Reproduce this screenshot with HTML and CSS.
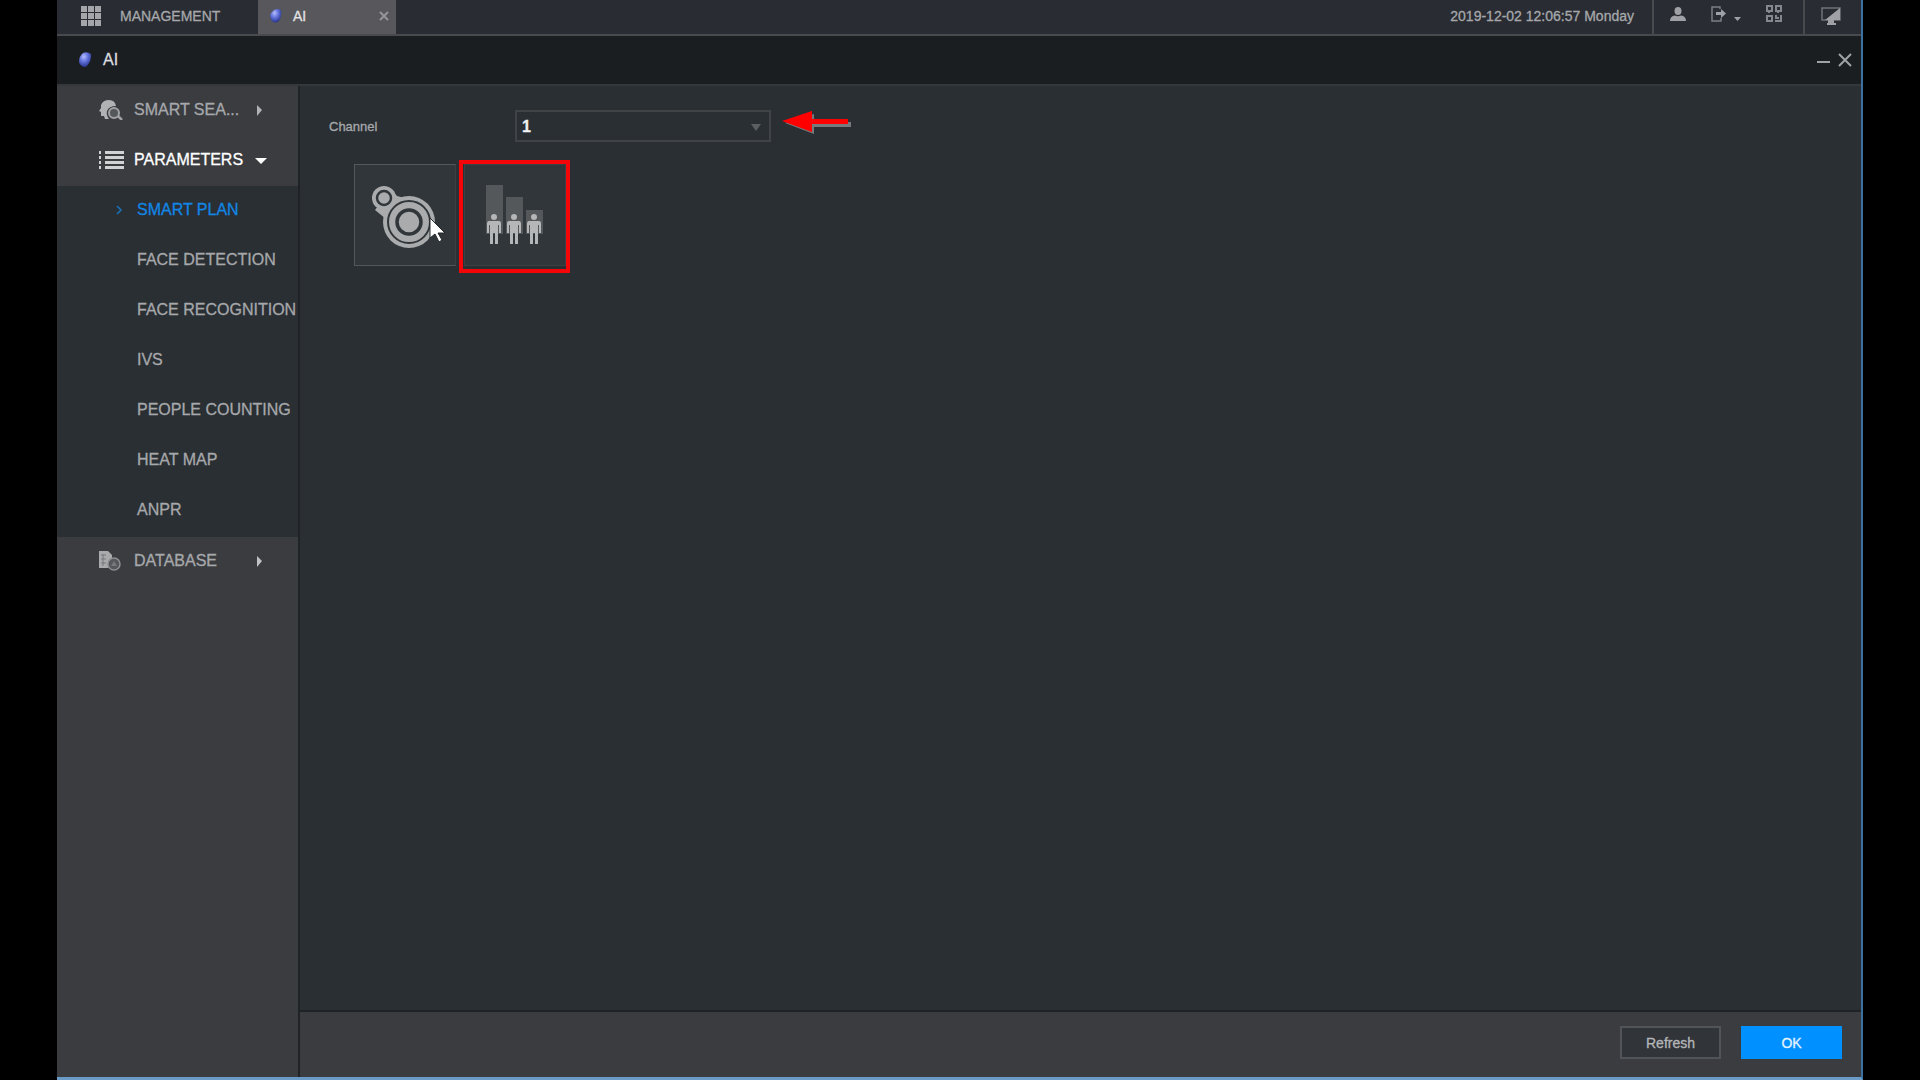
FILE: index.html
```html
<!DOCTYPE html>
<html lang="en">
<head>
    <meta charset="UTF-8">
    <meta name="viewport" content="width=device-width, initial-scale=1.0">
    <title>AI - Smart Plan</title>
    <link rel="stylesheet" href="styles.css">
</head>
<body>
    <div class="app">
        <header class="topbar">
            <button class="management">
                <svg width="20" height="20" viewBox="0 0 20 20" fill="#a4a6aa">
                    <path d="M0 0h6v6H0zM7 0h6v6H7zM14 0h6v6h-6zM0 7h6v6H0zM7 7h6v6H7zM14 7h6v6h-6zM0 14h6v6H0zM7 14h6v6H7zM14 14h6v6h-6z"/>
                </svg>
                MANAGEMENT
            </button>
            <div class="tab">
                <svg width="14" height="16" viewBox="0 0 14 16">
                    <defs>
                        <radialGradient id="gem" cx="0.4" cy="0.3" r="0.7">
                            <stop offset="0" stop-color="#b4bbfa"/>
                            <stop offset="0.45" stop-color="#6878e0"/>
                            <stop offset="1" stop-color="#28348e"/>
                        </radialGradient>
                    </defs>
                    <path d="M5 2Q9 0 12 2Q13 8 10 13Q6 16 3 13Q0 9 2 5Z" fill="url(#gem)"/>
                </svg>
                <span class="tab-name">AI</span>
                <button class="tab-close" aria-label="Close tab">
                    <svg width="10" height="10" viewBox="0 0 10 10" stroke="#96979b" stroke-width="2"><path d="M1 1l8 8M9 1L1 9"/></svg>
                </button>
            </div>
            <div class="clock">2019-12-02 12:06:57 Monday</div>
            <div class="tools">
                <button aria-label="User">
                    <svg width="16" height="16" viewBox="0 0 16 16" fill="#a0a1a7"><ellipse cx="8" cy="5" rx="3.500" ry="4"/><path d="M0 15q0-5 5-5.500q3 1.500 6 0q5 .5 5 5.500z"/></svg>
                </button>
                <button class="exit" aria-label="Log out">
                    <svg width="30" height="16" viewBox="0 0 30 16"><path d="M9 3V1H1v14h9v-3" fill="none" stroke="#7d7f85" stroke-width="1.500"/><path d="M5 6h5V3l5 4.500-5 4.500V9H5z" fill="#a0a1a7"/><path d="M23 11h7l-3.500 4z" fill="#a0a1a7"/></svg>
                </button>
                <button aria-label="QR code">
                    <svg width="16" height="18" viewBox="0 0 16 18" fill="none" stroke="#85878d" stroke-width="2"><path d="M1 1h5v5H1zM10 1h5v5h-5zM1 11h5v5H1zM15 10v6H9M10 10v3h3M3 7v1M12 7v1"/></svg>
                </button>
            </div>
            <button class="monitor" aria-label="Display">
                <svg width="20" height="18" viewBox="0 0 20 18"><path d="M1 1h18v12H1z" fill="none" stroke="#6f7177" stroke-width="1.500"/><path d="M19 1v12H4zM7 13h6v3h2v2H6v-2h1z" fill="#a0a1a7"/></svg>
            </button>
        </header>

        <div class="titlebar">
            <svg width="14" height="18" viewBox="0 0 14 18"><path d="M5 2Q9 0 13 3Q14 10 8 16Q2 16 1 11Q1 5 5 2Z" fill="url(#gem)"/></svg>
            <h1>AI</h1>
            <button aria-label="Minimize">
                <svg width="13" height="14" viewBox="0 0 13 14"><path d="M0 9h13" stroke="#a0a2a4" stroke-width="2"/></svg>
            </button>
            <button aria-label="Close">
                <svg width="14" height="14" viewBox="0 0 14 14"><path d="M1 1l12 12M13 1L1 13" stroke="#a0a2a4" stroke-width="2"/></svg>
            </button>
        </div>

        <div class="body">
            <nav class="sidebar">
                <button class="group">
                    <svg width="25" height="20" viewBox="0 0 25 20"><path d="M2 5Q4 0 10 0Q16 0 17 6Q10 6 8 11Q7 15 10 19H6L5 16H2V12L0 11L2 8Z" fill="#b0b2b4"/><circle cx="15" cy="13" r="5" fill="#55585b" stroke="#a0a2a4" stroke-width="2"/><path d="M19 16l4 4" stroke="#a0a2a4" stroke-width="2.500"/></svg>
                    <span class="group-name">SMART SEA...</span>
                    <svg width="12" height="12" viewBox="0 0 12 12"><path d="M2 1l5 5-5 6z" fill="#b0b2b4"/></svg>
                </button>
                <button class="group open">
                    <svg width="25" height="20" viewBox="0 0 25 20" fill="#d0d2d4"><path d="M0 1h2v3H0zM0 6h2v3H0zM0 11h2v3H0zM0 16h2v3H0zM6 1h19v3H6zM6 6h19v3H6zM6 11h19v3H6zM6 16h19v3H6z"/></svg>
                    <span class="group-name">PARAMETERS</span>
                    <svg width="12" height="12" viewBox="0 0 12 12"><path d="M0 4h12l-6 6z" fill="#fff"/></svg>
                </button>
                <div class="submenu">
                    <a href="#" class="active"><svg width="8" height="10" viewBox="0 0 8 10"><path d="M1 1l4 4-4 4" fill="none" stroke="#1a73bd" stroke-width="1.500"/></svg>SMART PLAN</a>
                    <a href="#">FACE DETECTION</a>
                    <a href="#">FACE RECOGNITION</a>
                    <a href="#">IVS</a>
                    <a href="#">PEOPLE COUNTING</a>
                    <a href="#">HEAT MAP</a>
                    <a href="#">ANPR</a>
                </div>
                <button class="group">
                    <svg width="25" height="20" viewBox="0 0 25 20"><path d="M0 0h9l4 4v6l-4 7H0z" fill="#a8aaac"/><path d="M2 4h5M2 8h5M2 12h5M4 3v12" stroke="#77797d"/><circle cx="15" cy="13" r="6" fill="#55575b" stroke="#8c8e92" stroke-width="1.500"/><path d="M12 15l3-5 3 5z" fill="#77797d"/></svg>
                    <span class="group-name">DATABASE</span>
                    <svg width="12" height="12" viewBox="0 0 12 12"><path d="M2 1l5 5-5 6z" fill="#c0c2c4"/></svg>
                </button>
            </nav>

            <div class="main">
                <main class="content">
                    <div class="channel-row">
                        <label for="channel">Channel</label>
                        <div class="select-box">
                            <select id="channel">
                                <option>1</option>
                            </select>
                            <svg width="10" height="8" viewBox="0 0 10 8"><path d="M0 0h10L5 7z" fill="#5c5f62"/></svg>
                        </div>
                        <svg class="arrow" width="72" height="26" viewBox="0 0 72 26">
                            <path d="M3 12L32 3v8h37v5H32v7z" fill="#777a7c"/>
                            <path d="M0 10L30 0v8h36v5H30v8z" fill="#f00"/>
                        </svg>
                    </div>
                    <div class="plans">
                        <button class="plan" aria-label="IVS">
                            <svg width="100" height="100" viewBox="0 0 100 100">
                                <g fill="#a9abac">
                                    <path d="M20 45L31 54L54 34L42 31L36 24Z"/>
                                    <circle cx="29" cy="33" r="12"/>
                                    <circle cx="54" cy="57" r="26"/>
                                </g>
                                <g fill="none" stroke="#31363a">
                                    <circle cx="29" cy="33" r="7" stroke-width="2.500"/>
                                    <circle cx="54" cy="57" r="21" stroke-width="2"/>
                                    <circle cx="54" cy="57" r="12" stroke-width="3.500"/>
                                </g>
                            </svg>
                            <svg class="cursor" width="17" height="26" viewBox="0 0 17 26"><path d="M1 1v20l5-4 4 8 3-2-4-7h7z" fill="#fff" stroke="#24282b"/></svg>
                        </button>
                        <button class="plan selected" aria-label="People counting">
                            <svg width="100" height="100" viewBox="0 0 100 100">
                                <path d="M21 20h17v49H21zM41 32h17v37H41zM61 45h17v24H61z" fill="#54585b"/>
                                <defs>
                                    <g id="person" fill="#b4b6b7">
                                        <circle cx="8" cy="3" r="3"/>
                                        <path d="M3 7h10q2 0 2 3v9h-2v-8h-1v19H9V19H7v11H4V11H3v8H1v-9q0-3 2-3z"/>
                                    </g>
                                </defs>
                                <use href="#person" x="21" y="49"/>
                                <use href="#person" x="41" y="49"/>
                                <use href="#person" x="61" y="49"/>
                            </svg>
                        </button>
                    </div>
                </main>
                <footer class="actions">
                    <button class="btn">Refresh</button>
                    <button class="btn primary">OK</button>
                </footer>
            </div>
        </div>
    </div>
</body>
</html>
```
FILE: styles.css
```css
:root {
    --panel: #2a2f33;
    --side: #3a3c40;
    --text: #a6a8ab;
    --blue: #0090ff;
}

* {
    box-sizing: border-box;
}

body {
    margin: 0;
    background: #000;
    color: var(--text);
    font-family: "Liberation Sans", Arial, sans-serif;
    font-size: 14px;
    -webkit-text-stroke: 0.3px;
}

button {
    display: flex;
    align-items: center;
    padding: 0;
    border: 0;
    background: none;
    color: inherit;
    font: inherit;
    cursor: pointer;
}

svg {
    display: block;
    flex: none;
}

.app {
    display: flex;
    flex-direction: column;
    min-height: 100vh;
    margin: 0 57px;
    background: var(--panel);
    border-right: 2px solid #3b70a0;
    border-bottom: 3px solid #6b9cc8;
}

/* top bar */
.topbar {
    display: flex;
    height: 36px;
    background: #292c32;
    border-bottom: 2px solid #484a4e;
}

.management {
    gap: 19px;
    width: 201px;
    padding: 0 0 3px 24px;
}

.tab {
    display: flex;
    align-items: center;
    width: 138px;
    padding: 0 7px 3px 11px;
    background: #57575c;
    color: #e4e4e6;
}

.tab-name {
    margin-left: 10px;
}

.tab-close {
    margin-left: auto;
}

.clock {
    display: flex;
    align-items: center;
    margin-left: auto;
    padding: 0 18px 3px 0;
}

.tools {
    display: flex;
    align-items: center;
    gap: 25px;
    padding: 0 21px 6px 16px;
    border-left: 2px solid #484a4e;
}

.monitor {
    width: 58px;
    padding: 0 0 3px 16px;
    border-left: 2px solid #484a4e;
}

/* window title */
.titlebar {
    display: flex;
    align-items: center;
    gap: 8px;
    height: 50px;
    padding: 0 9px 0 21px;
    background: #1b1e21;
    border-bottom: 2px solid #34383b;
}

.titlebar h1 {
    flex: 1;
    margin: 0 0 0 3px;
    color: #dcdee0;
    font-size: 16px;
    font-weight: normal;
}

.body {
    display: flex;
    flex: 1;
}

/* side menu */
.sidebar {
    width: 243px;
    background: var(--side);
    border-right: 2px solid #202326;
    font-size: 16px;
}

.group {
    width: 100%;
    height: 50px;
    padding: 0 0 3px 42px;
}

.group-name {
    width: 121px;
    margin-left: 10px;
    text-align: left;
}

.group.open {
    color: #fff;
}

.submenu {
    padding-bottom: 1px;
    background: var(--panel);
}

.submenu a {
    display: flex;
    align-items: center;
    position: relative;
    height: 50px;
    padding: 0 0 3px 80px;
    color: var(--text);
    text-decoration: none;
    white-space: nowrap;
}

.submenu a.active {
    color: #1286e4;
}

.submenu svg {
    position: absolute;
    left: 59px;
}

/* content */
.main {
    display: flex;
    flex: 1;
    flex-direction: column;
}

.content {
    flex: 1;
    padding: 24px 29px;
}

.channel-row {
    display: flex;
    align-items: center;
}

.channel-row label {
    width: 186px;
    font-size: 13px;
}

.select-box {
    position: relative;
    width: 256px;
}

.select-box select {
    display: block;
    width: 100%;
    height: 32px;
    padding: 0 5px;
    appearance: none;
    background: var(--panel);
    border: 2px solid #404447;
    border-radius: 0;
    color: #f0f2f3;
    font: bold 16px "Liberation Sans", Arial, sans-serif;
}

.select-box svg {
    position: absolute;
    top: 14px;
    right: 10px;
    pointer-events: none;
}

.arrow {
    margin: 0 0 4px 11px;
}

.plans {
    display: flex;
    gap: 8px;
    margin: 22px 0 0 25px;
}

.plan {
    position: relative;
    width: 102px;
    height: 102px;
    background: #31363a;
    border: 1px solid #54585b;
}

.plan:first-child {
    border-right-color: #3a3f42;
}

.plan.selected {
    border-color: #3c4144;
}

.plan.selected::after {
    content: "";
    position: absolute;
    inset: -5px -5px -8px -6px;
    border: 4px solid #f50508;
}

.cursor {
    position: absolute;
    left: 74px;
    top: 52px;
}

/* bottom buttons */
.actions {
    display: flex;
    justify-content: flex-end;
    gap: 20px;
    padding: 14px 19px 18px;
    background: var(--side);
    border-top: 2px solid #202326;
}

.btn {
    justify-content: center;
    width: 101px;
    height: 33px;
    background: #313439;
    border: 2px solid #515458;
    color: #b4b6b8;
}

.btn.primary {
    background: var(--blue);
    border-color: var(--blue);
    color: #e6f3ff;
}
```
